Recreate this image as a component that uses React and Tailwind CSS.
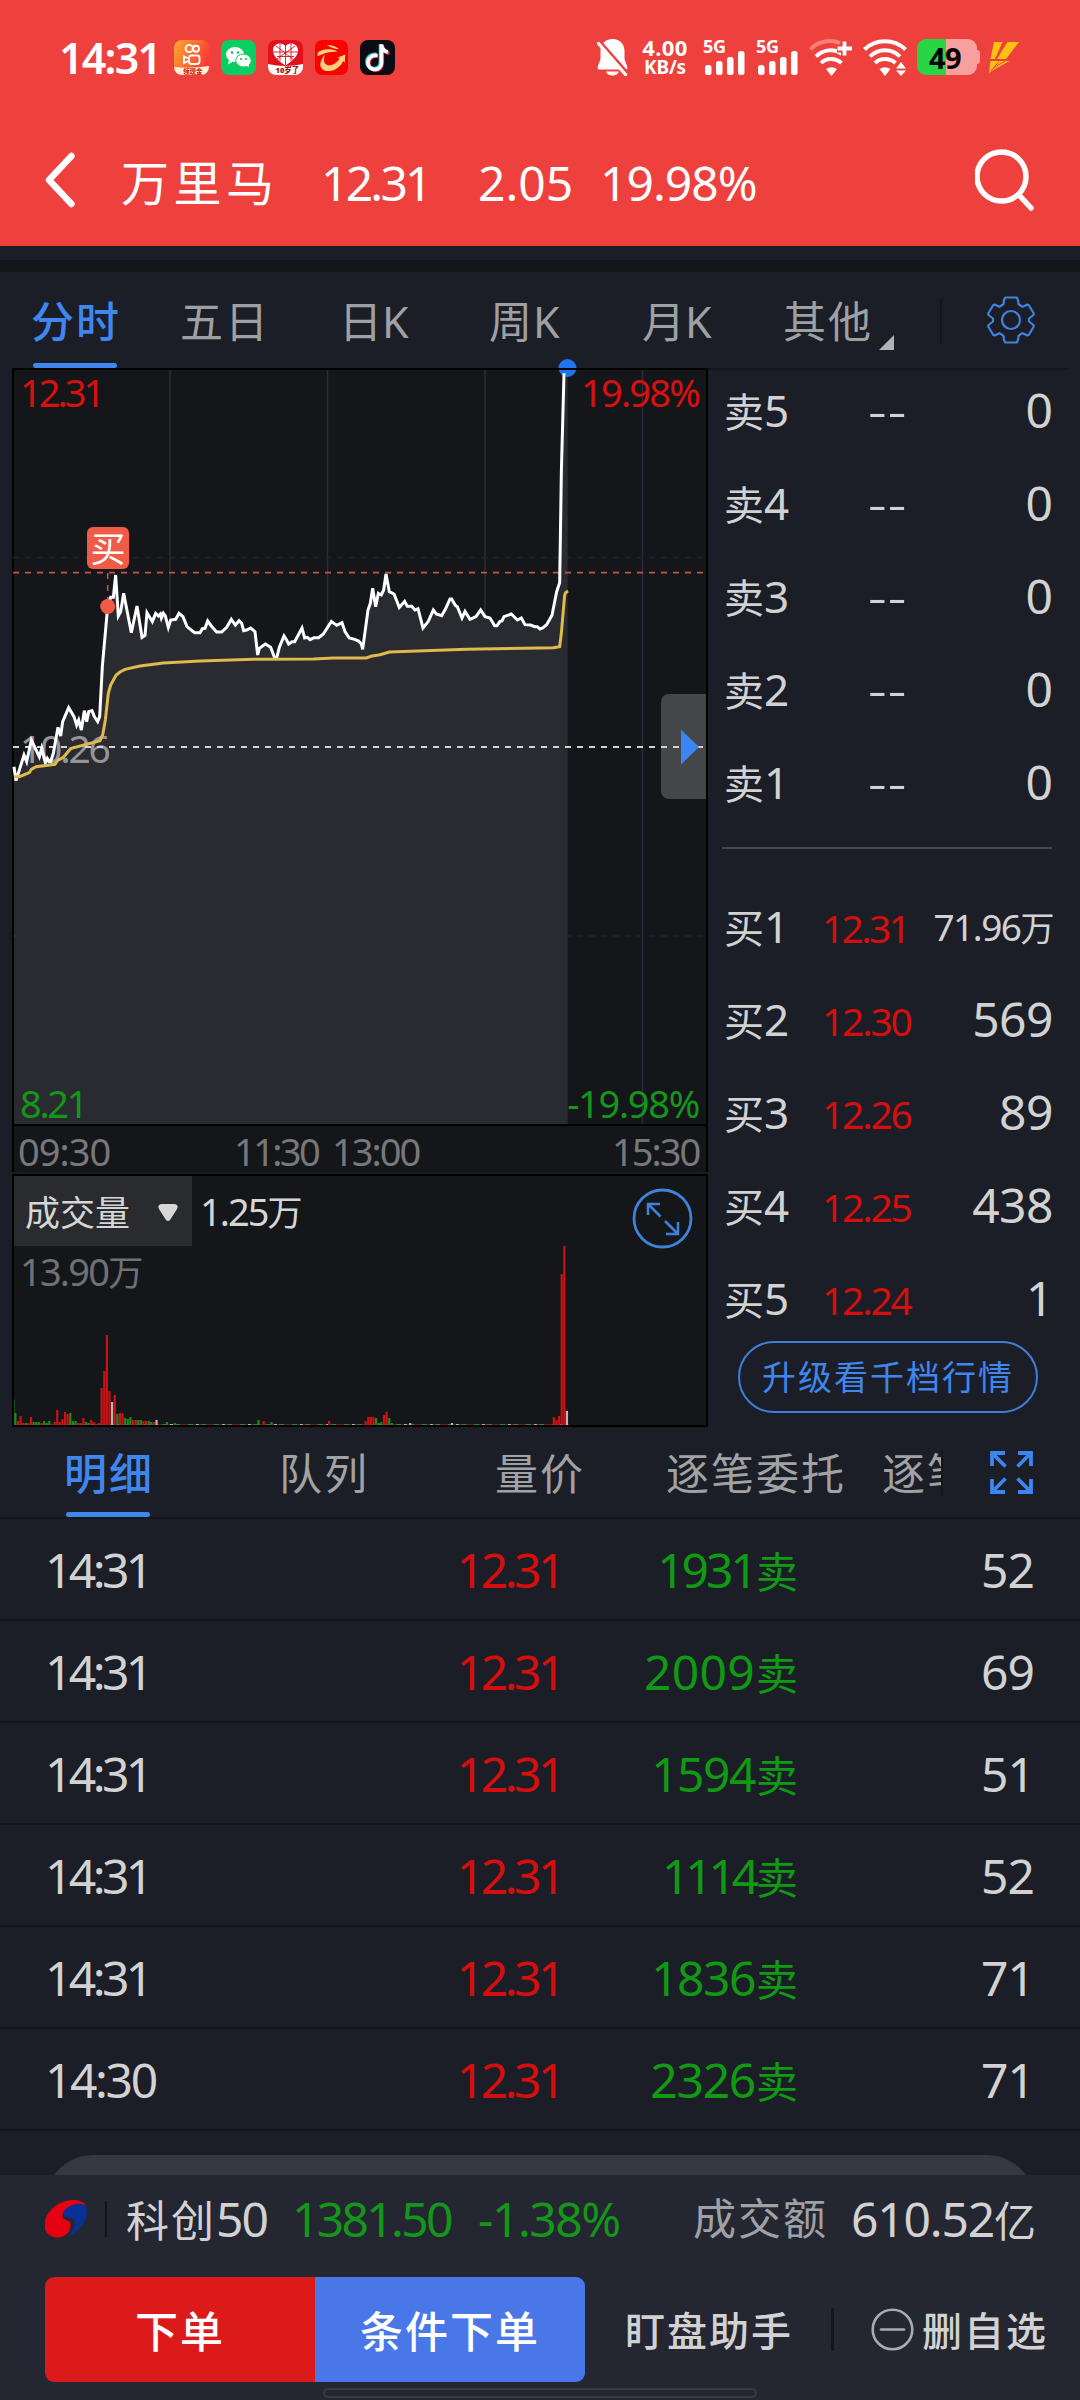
import React from 'react';

// Intraday price, three units per pixel, origin at the left page edge
const PRICE_POINTS =
    '42,680 48,722 72,645 80,665 94,600 118,650 125,625 136,668 142,655 148,665 152,665 160,640 174,562 182,588 188,545 206,503 222,530 230,555 236,540 244,570 253,512 260,545 266,515 276,512 283,530 293,545 299,530 307,380 323,200 332,172 340,172 347,105 355,228 362,215 371,160 394,278 411,198 426,292 435,286 441,218 457,245 467,220 475,228 481,222 484,234 490,220 496,228 505,262 512,240 527,238 537,220 549,230 561,260 584,278 600,278 607,266 615,265 623,243 634,258 650,276 665,276 680,262 694,238 706,255 717,242 725,250 731,272 740,270 752,264 765,275 773,345 778,325 796,312 812,322 824,354 830,354 838,322 852,288 860,300 866,312 876,305 884,305 906,264 914,294 922,292 930,299 942,293 956,293 970,282 994,244 1010,256 1026,248 1035,275 1048,294 1064,298 1076,303 1084,312 1088,328 1104,210 1111,190 1118,145 1127,200 1135,160 1144,165 1151,150 1158,102 1168,155 1182,162 1198,202 1214,184 1222,199 1235,199 1245,210 1254,206 1269,264 1285,244 1300,210 1309,222 1325,227 1336,208 1350,177 1355,177 1366,196 1372,200 1386,234 1395,214 1410,238 1428,230 1442,210 1455,230 1470,234 1484,257 1491,257 1500,244 1506,243 1512,230 1534,222 1552,240 1564,234 1575,254 1592,255 1604,260 1612,260 1620,267 1628,264 1640,254 1656,226 1670,155 1679,128 1681,0 1684,-200 1692,-500';

const AVERAGE_POINTS =
    '42,710 58,710 88,698 94,688 108,680 165,673 172,662 190,652 212,626 300,602 308,585 316,540 325,460 332,435 348,406 360,396 375,388 420,378 490,369 600,363 760,358 940,357 1000,354 1098,354 1116,348 1140,344 1168,336 1400,328 1660,323 1679,320 1684,280 1694,165 1697,158 1704,153';

const VOLUME_STEP = 2.614;
const VOLUME_COLORS = { r: '#cc1212', g: '#1c8a1c', w: '#b9b9bb' };

// [minute, height, direction]
const VOLUME_BARS = [
    [0, 12, 'g'], [1, 4, 'r'], [2, 9, 'r'], [3, 2, 'r'], [4, 2, 'g'], [5, 2, 'r'], [6, 8, 'r'], [7, 3, 'g'],
    [8, 3, 'g'], [9, 3, 'g'], [10, 2, 'r'], [11, 4, 'g'], [12, 2, 'g'], [13, 4, 'g'], [15, 3, 'r'], [16, 15, 'r'],
    [17, 3, 'r'], [18, 6, 'r'], [19, 13, 'r'], [20, 11, 'r'], [21, 12, 'g'], [22, 4, 'g'], [23, 4, 'g'],
    [24, 2, 'r'], [25, 2, 'r'], [26, 7, 'r'], [27, 3, 'g'], [28, 2, 'g'], [29, 5, 'r'], [30, 3, 'r'], [32, 2, 'r'],
    [33, 37, 'r'], [34, 54, 'r'], [35, 90, 'r'], [36, 34, 'r'], [37, 23, 'w'], [38, 30, 'r'], [39, 11, 'g'],
    [40, 12, 'r'], [41, 12, 'r'], [42, 7, 'g'], [43, 6, 'g'], [44, 8, 'g'], [45, 5, 'r'], [46, 5, 'r'],
    [47, 5, 'g'], [48, 5, 'g'], [49, 4, 'r'], [50, 4, 'r'], [51, 4, 'g'], [52, 3, 'g'], [53, 3, 'r'],
    [54, 5, 'w'], [58, 3, 'g'], [61, 2, 'g'], [93, 5, 'g'], [95, 4, 'r'], [98, 3, 'g'],
    [120, 4, 'r'], [134, 4, 'r'], [135, 8, 'r'], [136, 8, 'r'], [137, 8, 'r'], [138, 7, 'g'], [139, 2, 'g'],
    [140, 3, 'g'], [141, 10, 'r'], [142, 13, 'r'], [143, 7, 'g'], [144, 2, 'g'], [151, 2, 'w'], [167, 2, 'w'],
    [206, 8, 'r'], [207, 5, 'r'], [208, 9, 'r'], [209, 151, 'r'], [210, 179, 'r'], [211, 14, 'w'],
];

const SELL_LEVELS = ['5', '4', '3', '2', '1'];

const BUY_LEVELS = [
    { level: '1', price: '12.31', volume: '71.96', unit: '万', tracking: 'tracking-[-2.700px]' },
    { level: '2', price: '12.30', volume: '569', tracking: 'tracking-[-2.200px]' },
    { level: '3', price: '12.26', volume: '89', tracking: 'tracking-[-2.200px]' },
    { level: '4', price: '12.25', volume: '438', tracking: 'tracking-[-2.200px]' },
    { level: '5', price: '12.24', volume: '1', tracking: 'tracking-[-2.200px]' },
];

// The digit 1 is narrow, so each figure carries its own tracking
const TRADES = [
    { time: '14:31', volume: '1931', count: '52', timeClass: 'tracking-[-3.600px]', volumeClass: 'tracking-[-3px]' },
    { time: '14:31', volume: '2009', count: '69', timeClass: 'tracking-[-3.600px]', volumeClass: 'tracking-[0.300px]' },
    { time: '14:31', volume: '1594', count: '51', timeClass: 'tracking-[-3.600px]', volumeClass: 'tracking-[-1.500px]' },
    { time: '14:31', volume: '1114', count: '52', timeClass: 'tracking-[-3.600px]', volumeClass: 'tracking-[-4.200px]' },
    { time: '14:31', volume: '1836', count: '71', timeClass: 'tracking-[-3.600px]', volumeClass: 'tracking-[-1.500px]' },
    { time: '14:30', volume: '2326', count: '71', timeClass: 'tracking-[-2.400px]', volumeClass: 'tracking-[-1.300px]' },
];

const AppBadges = () => (
    <div className="flex items-center gap-[12px]">
        <svg width="35" height="35" viewBox="0 0 35 35">
            <defs>
                <linearGradient id="ks" x1="0" y1="0" x2="1" y2="0.5">
                    <stop offset="0" stopColor="#ffab2e" />
                    <stop offset="1" stopColor="#ff3a36" />
                </linearGradient>
                <clipPath id="ksClip">
                    <rect width="35" height="35" rx="8" />
                </clipPath>
            </defs>
            <g clipPath="url(#ksClip)">
                <rect width="35" height="35" fill="url(#ks)" />
                <path d="M0 27q17 2 35-1v9H0z" fill="#fff0d8" />
                <g fill="none" stroke="#fff" strokeWidth="1.9">
                    <circle cx="15.2" cy="8.5" r="3.6" />
                    <circle cx="22" cy="8.8" r="3" />
                    <rect x="15" y="15.5" width="10.5" height="8.5" rx="2.4" />
                    <path d="M14.5 18.5 10 16.500v6.500l4.500-2" />
                </g>
                <text x="9" y="34" fontSize="6.500" fontWeight="900" fill="#d02b20">领现金</text>
            </g>
        </svg>
        <svg width="35" height="35" viewBox="0 0 35 35">
            <rect width="35" height="35" rx="8" fill="#07cf63" />
            <g fill="#fff">
                <ellipse cx="14" cy="14.500" rx="9" ry="7.500" />
                <path d="M8 20l-1 4.500 5-3z" />
                <ellipse cx="22.500" cy="20.500" rx="7.800" ry="6.500" stroke="#07cf63" strokeWidth="1" />
                <path d="M25 25l2.500 2.500.500-4z" />
            </g>
            <g fill="#07b957">
                <circle cx="11" cy="12.500" r="1.200" />
                <circle cx="17" cy="12.500" r="1.200" />
                <circle cx="20" cy="19" r="1" />
                <circle cx="25" cy="19" r="1" />
            </g>
        </svg>
        <svg width="35" height="35" viewBox="0 0 35 35">
            <defs>
                <clipPath id="pddClip">
                    <rect width="35" height="35" rx="8" />
                </clipPath>
            </defs>
            <g clipPath="url(#pddClip)">
                <rect width="35" height="35" fill="#e3101c" />
                <path d="M0 24q17 4 35 0v11H0z" fill="#fff" />
                <path d="M17.500 25.500C9 20 4.500 15 5 9.500 5.500 4 13 1 17.500 6c4.500-5 12-2 12.500 3.500.500 5.500-4 10.500-12.500 16z" fill="#fff" />
                <path d="M8 6l18 14M27 6 9 19M5 12h25M12 3v18M23 3v18M17.500 5v20M9 16.500h17" stroke="#e3101c" strokeWidth="0.900" fill="none" />
                <text x="7.500" y="33" fontSize="7.500" fontWeight="900" fill="#a01818">10岁了</text>
            </g>
        </svg>
        <svg width="33" height="35" viewBox="0 0 33 35">
            <rect width="33" height="35" rx="7" fill="#fb0200" />
            <path d="M12 5.500c4-1 8 0 12 3.500-3 .2-5-.5-7-1.200z" fill="#ffd27a" />
            <path d="M2.500 13c4-4 12-5 20-1.800-5 .6-7 .8-10 1.400-4 .7-6 2.600-10 3.400z" fill="#ffd27a" />
            <path d="M10 14.500c-3 3-6 9-4 13 2 4.500 10 4.500 15 1.500 4-2.500 6-5 7-8l1.800 1.500.5-8-7.500 3 1.700 1.200c-2.500 4-7 7-11.500 6.500-4-.5-5-5-3-10.700z" fill="#ffd27a" />
        </svg>
        <svg width="35" height="35" viewBox="0 0 35 35">
            <rect width="35" height="35" rx="8" fill="#0b0b14" />
            <g fill="none" strokeWidth="3.600">
                <path d="M17.500 15.500c-5-.7-9.500 2-9.500 7s4 7.300 7.500 7 6-3 6-7V5" stroke="#27d7d8" transform="translate(-1 -1)" />
                <path d="M17.500 15.500c-5-.7-9.500 2-9.500 7s4 7.300 7.500 7 6-3 6-7V5c.5 4 3 7 7 7.500" stroke="#f4264f" transform="translate(.8 .6)" />
                <path d="M17.500 15.500c-5-.7-9.500 2-9.500 7s4 7.300 7.500 7 6-3 6-7V4.500c.5 4.500 3 7 6.500 7.500" stroke="#fff" />
            </g>
        </svg>
    </div>
);

const SignalBars = () => (
    <div className="relative h-9 w-[42px]">
        <span className="absolute left-0 top-0 text-[18px] font-bold leading-[14px] tracking-[-0.200px]">5G</span>
        <svg className="absolute left-0 top-0" width="42" height="36" viewBox="0 0 42 36" fill="#fff">
            <rect x="2" y="26" width="6.500" height="10" rx="2.500" />
            <rect x="13" y="22" width="6.500" height="14" rx="2.500" />
            <rect x="24" y="18" width="6.500" height="18" rx="2.500" />
            <rect x="35" y="12" width="6.500" height="24" rx="2.500" />
        </svg>
    </div>
);

const StatusBar = () => (
    <div className="flex h-[114px] items-center pl-[59px] text-white">
        <span className="w-[115px] text-[43px] font-semibold leading-none tracking-[-1.800px]">14:31</span>
        <AppBadges />
        <svg className="ml-[202px] shrink-0" width="31" height="37" viewBox="0 0 31 37">
            <path d="M15.500 0C8 0 3.500 5 3.500 12v8L.8 27.500c-.5 2 .2 3 1.700 3h26c1.500 0 2.200-1 1.700-3L27.500 20v-8c0-7-4.500-12-12-12z" fill="#fff" />
            <path d="M9 32.500h13c-1.500 5.500-11.500 5.500-13 0z" fill="#fff" />
            <path d="M2.500 2 30 33.500" stroke="#ee403c" strokeWidth="3" />
            <path d="M1.500 4.500 28.500 35.500" stroke="#fff" strokeWidth="3.400" strokeLinecap="round" />
        </svg>
        <div className="ml-[12px] flex h-9 w-[50px] shrink-0 flex-col items-center justify-between font-bold">
            <span className="text-[22px] leading-[17px] tracking-[0.400px]">4.00</span>
            <span className="text-[19px] leading-[15px] tracking-[-0.200px]">KB/s</span>
        </div>
        <div className="ml-[13px] flex shrink-0 gap-[11px]">
            <SignalBars />
            <SignalBars />
        </div>
        <svg className="ml-[11px] shrink-0" width="44" height="37" viewBox="0 0 44 37" fill="none" stroke="#fff" strokeWidth="4">
            <path d="M1.500 10.500C9 1.500 22 .5 31 4" stroke="#f97f7c" />
            <path d="M7 17.500c7-7 18-8.500 26-2.500M12 24c5-5.500 15-5.500 20.500 0" />
            <path d="M17 30q5.500-3.500 11 0l-5.500 7z" fill="#fff" stroke="none" />
            <path d="M28 10h15M35.500 3v14" stroke="#ee403c" strokeWidth="7" />
            <path d="M28.500 9.500H43M35.500 2.500v14" strokeWidth="3.800" />
        </svg>
        <svg className="ml-[10px] shrink-0" width="44" height="37" viewBox="0 0 44 37" fill="none" stroke="#fff" strokeWidth="4">
            <path d="M1.500 10.500c11-11 30-11 41 0M7 17.500c8-8.500 22-8.500 30 0M12 24c5-5.500 15-5.500 20.500 0" />
            <path d="M16.500 30q5.500-3.500 11 0L22 37z" fill="#fff" stroke="none" />
            <path d="M33 29.500h10L38 23zM33 31.500h10L38 37z" fill="#fff" stroke="none" />
        </svg>
        <div className="ml-[10px] flex shrink-0 items-center">
            <div className="flex h-9 w-[60px] items-center justify-center rounded-[9px] bg-linear-to-r from-[#27d545] from-48% to-[#f8a09e] to-48% pr-1 text-[29px] font-bold leading-none tracking-[-0.500px] text-black">
                49
            </div>
            <div className="h-[14px] w-[3px] rounded-r-full bg-[#f8a09e]" />
        </div>
        <svg className="ml-[9px] shrink-0" width="30" height="31" viewBox="0 0 30 31" fill="#fbc012">
            <path d="M5 0H13.500L6 17H1.500zM18.500 0H30L17 17H8zM1.300 19H20.500L6 27 0 31z" />
            <path d="M2 29 10 19.500M4 26 16 19" stroke="#ee403c" strokeWidth="1" />
        </svg>
    </div>
);

const TitleBar = () => (
    <div className="flex h-[132px] items-center pl-[45px] text-[48px] leading-none text-white">
        <svg className="shrink-0" width="30" height="56" viewBox="0 0 30 56" fill="none" stroke="#fff" strokeWidth="6.500" strokeLinecap="round" strokeLinejoin="round">
            <path d="M26.500 4 4 28l22.500 24" />
        </svg>
        <h1 className="ml-[46px] mt-[6px] w-[200px] text-[48px] tracking-[4.500px]">万里马</h1>
        <span className="mt-[6px] w-[157px] tracking-[-2.800px]">12.31</span>
        <span className="mt-[6px] w-[122px]">2.05</span>
        <span className="mt-[6px] w-[375px] tracking-[-1px]">19.98%</span>
        <svg className="shrink-0" width="60" height="64" viewBox="0 0 60 64" fill="none" stroke="#fff" strokeWidth="5.500" strokeLinecap="round">
            <circle cx="26.500" cy="28.500" r="24.500" />
            <path d="M44.500 47.500 56 60" />
        </svg>
    </div>
);

const GearIcon = () => (
    <svg width="48" height="48" viewBox="0 0 48 48" fill="none" stroke="#4082dc" strokeWidth="2.200" strokeLinejoin="round">
        <path d="M17 4 18.200 1.500H29.800L31 4l.5 4q2 1.500 4 2.800l5-2.300 1.500 1 4.800 8-.3 1.500-4.500 3.500v3l4.500 3.500.3 1.500-4.800 8-1.500 1-5-2.300q-2 1.300-4 2.800l-.5 4-1.200 2.500H18.200L17 44l-.5-4q-2-1.500-4-2.800l-5 2.300-1.500-1-4.800-8 .3-1.500L6 25.500v-3L1.500 19l-.3-1.500L6 9.500l1.500-1 5 2.300q2-1.300 4-2.800z" />
        <circle cx="24" cy="24" r="9" />
    </svg>
);

const PeriodTabs = () => (
    <div className="relative flex h-[96px] items-center text-[43px] leading-none text-[#9fa0a3]">
        <div className="relative flex h-full w-[148px] items-center pl-[31px] pt-[2px] font-medium tracking-[2px] text-[#3f86ee]">
            分时
            <div className="absolute bottom-0 left-[33px] h-[5px] w-[84px] rounded-full bg-[#3f86ee]" />
        </div>
        <span className="w-[160px] pl-[32px] pt-[2px] tracking-[2px]">五日</span>
        <span className="w-[150px] pl-[31px] pt-[2px]">日K</span>
        <span className="w-[150px] pl-[31px] pt-[2px] tracking-[1px]">周K</span>
        <span className="w-[150px] pl-[34px] pt-[2px]">月K</span>
        <span className="w-[121px] pl-[25px] pt-[2px] tracking-[2px]">其他</span>
        <svg className="mt-[45px]" width="15" height="15" viewBox="0 0 15 15">
            <path d="M15 0v15H0z" fill="#b0b1b3" />
        </svg>
        <div className="ml-[46px] h-[45px] w-[2px] bg-[#15161a]" />
        <div className="ml-[45px]">
            <GearIcon />
        </div>
    </div>
);

const PriceChart = () => (
    <div className="relative h-[758px] w-[696px] border-2 border-black bg-[#15161a] text-[38px] leading-none">
        <svg className="absolute left-0 top-0 overflow-visible" width="692" height="754" viewBox="14 370 692 754" fill="none">
            <path d="M170 370V1124M327.500 370V1124M485 370V1124M642.500 370V1124" stroke="#2c2d38" strokeWidth="1.500" />
            <path d="M13 557.500H706M13 936H706" stroke="#222328" strokeWidth="1.500" strokeDasharray="6 6" />
            <g transform="translate(0 540) scale(0.33333)">
                <polygon points={`42,1752 ${PRICE_POINTS} 1703,-500 1703,1752`} fill="#2a2b30" />
            </g>
            <path d="M13 572.700H706" stroke="#c25548" strokeWidth="1.800" strokeDasharray="6 6" />
            <path d="M107.700 573V600" stroke="#c25548" strokeWidth="1.600" strokeDasharray="6 6" />
            <text x="20" y="762.500" fontSize="39" letterSpacing="-2.200" fill="#949599">10.26</text>
            <path d="M669 694H706V799H669a8 8 0 0 1-8-8V702a8 8 0 0 1 8-8z" fill="#454649" />
            <path d="M13 747H706" stroke="#d3d3d6" strokeWidth="2" strokeDasharray="6 6" />
            <path d="M681 729.500 699 747 681 764.500z" fill="#3b86f4" />
            <circle cx="567.500" cy="368" r="9" fill="#1f74f0" />
            <g transform="translate(0 540) scale(0.33333)">
                <polyline points={PRICE_POINTS} stroke="#fff" strokeWidth="9" />
                <polyline points={AVERAGE_POINTS} stroke="#dfba4c" strokeWidth="9" />
            </g>
            <circle cx="107.700" cy="606.500" r="7.500" fill="#f05a46" />
            <path d="M552 369H584" stroke="#000" strokeWidth="2" />
        </svg>
        <span className="absolute left-[6px] top-[3px] tracking-[-3px] text-[#d81010]">12.31</span>
        <span className="absolute right-[7px] top-[3px] tracking-[-1.800px] text-[#d81010]">19.98%</span>
        <span className="absolute bottom-[2px] left-[6px] tracking-[-2.300px] text-[#14961a]">8.21</span>
        <span className="absolute bottom-[2px] right-[7px] tracking-[-1.300px] text-[#14961a]">-19.98%</span>
        <span className="absolute left-[73px] top-[157px] flex h-[42px] w-[42px] items-center justify-center rounded-[6px] bg-[#f05a46] text-[35px] text-white">
            买
        </span>
    </div>
);

const TimeAxis = () => (
    <div className="flex h-[46px] w-[696px] items-center border-x-2 border-black bg-[#15161a] pt-[3px] text-[38px] leading-none tracking-[-1px] text-[#77787b]">
        <span className="w-[220px] pl-[4px]">09:30</span>
        <span className="w-[98px] tracking-[-2.600px]">11:30</span>
        <span className="w-[280px] tracking-[-2px]">13:00</span>
        <span className="tracking-[-2px]">15:30</span>
    </div>
);

const VolumeChart = () => (
    <div className="relative h-[253px] w-[696px] border-2 border-black bg-[#15161a] leading-none">
        <div className="flex h-[70px] items-center text-[#d6d6d7]">
            <div className="flex h-full w-[178px] items-center bg-[#2a2b2f] pl-[11px] pt-[2px] text-[35px]">
                成交量
                <svg className="ml-[28px]" width="20" height="17" viewBox="0 0 20 17">
                    <path d="M3 0h14q4 1 2 5l-7 11q-2 2-4 0L1 5Q-1 1 3 0z" fill="#d6d6d7" />
                </svg>
            </div>
            <span className="ml-[8px] text-[38px] tracking-[-2px]">1.25<span className="text-[35px]">万</span></span>
        </div>
        <span className="ml-[6px] mt-[6px] block text-[38px] tracking-[-1.800px] text-[#707174]">13.90<span className="text-[35px]">万</span></span>
        <svg className="absolute right-[13px] top-[12px]" width="61" height="61" viewBox="0 0 61 61" fill="none" stroke="#3f82dc" strokeWidth="2.800">
            <circle cx="30.500" cy="30.500" r="28.500" />
            <path d="M28.500 28.500 16 16M16 27V16h12M33 33l12.500 12.500M46 34v12H34" strokeWidth="2.500" />
        </svg>
        <svg className="absolute bottom-0 left-0" width="692" height="182" viewBox="0 0 692 182">
            <rect y="156" width="1" height="26" fill="#14501a" />
            <rect y="181" width="555" height="1" fill="#7a1a1a" />
            <path d="M70 181.500H550" stroke="#2a8a2a" strokeWidth="1" strokeDasharray="5 8" />
            <path d="M78 181.500H550" stroke="#b0b0b0" strokeWidth="1" strokeDasharray="3 23" />
            {VOLUME_BARS.map(([minute, height, direction]) => (
                <rect
                    key={minute}
                    x={minute * VOLUME_STEP + 0.3}
                    y={182 - height}
                    width="2.200"
                    height={height}
                    fill={VOLUME_COLORS[direction]}
                />
            ))}
        </svg>
    </div>
);

const OrderBook = () => (
    <div className="flex w-[360px] flex-col border-t-2 border-[#15161c] pl-[16px] leading-none text-[#d2d2d3]">
        <div className="flex h-[477px] flex-col">
            {SELL_LEVELS.map((level) => (
                <div key={level} className="flex h-[93px] shrink-0 items-center pb-[14px]">
                    <span className="w-[144px] text-[40px]">卖<span className="text-[44px]">{level}</span></span>
                    <span className="pb-[2px] text-[58px] font-light tracking-[1px]">--</span>
                    <span className="ml-auto pr-[15px] text-[48px]">0</span>
                </div>
            ))}
        </div>
        <div className="ml-[-2px] h-[2px] w-[330px] bg-[#45464e]" />
        <div className="flex flex-col pt-[30px]">
            {BUY_LEVELS.map(({ level, price, volume, unit, tracking }) => (
                <div key={level} className="flex h-[93px] shrink-0 items-center">
                    <span className="w-[98px] text-[40px]">买<span className="text-[44px]">{level}</span></span>
                    <span className={`pt-[3px] text-[39px] text-[#d60e0e] ${tracking}`}>{price}</span>
                    {unit ? (
                        <span className="ml-auto pr-[15px] pt-[2px] text-[37px] tracking-[-1.500px]">{volume}<span className="text-[34px]">{unit}</span></span>
                    ) : (
                        <span className="ml-auto pr-[15px] text-[48px] tracking-[-0.500px]">{volume}</span>
                    )}
                </div>
            ))}
        </div>
        <button className="ml-[14px] mt-[-3px] h-[72px] w-[300px] shrink-0 rounded-full border-2 border-[#3f7fd8] text-[34px] tracking-[2px] text-[#3f86ee]">
            升级看千档行情
        </button>
    </div>
);

const DetailTabs = () => (
    <div className="flex h-[92px] items-center border-b-2 border-[#15161c] text-[43px] leading-none text-[#a1a2a4]">
        <div className="relative flex h-full w-[216px] items-center pl-[64px] pt-[2px] font-medium tracking-[2px] text-[#3f86ee]">
            明细
            <div className="absolute bottom-0 left-[66px] h-[5px] w-[84px] rounded-full bg-[#3f86ee]" />
        </div>
        <span className="w-[216px] pl-[63px] pt-[2px] tracking-[2px]">队列</span>
        <span className="w-[234px] pl-[63px] pt-[2px] tracking-[2px]">量价</span>
        <span className="w-[216px] pt-[2px] tracking-[2px]">逐笔委托</span>
        <span className="w-[59px] overflow-hidden whitespace-nowrap pt-[2px] tracking-[2px]">逐笔</span>
        <div className="h-[45px] w-[2px] bg-[#15161a]" />
        <svg className="ml-[47px]" width="43" height="43" viewBox="0 0 43 43" fill="none" stroke="#3a86f2" strokeWidth="3.800">
            <path d="M2 15V2H15M2.500 2.500 15.500 15.500M28 2H41V15M40.500 2.500 27.500 15.500M2 28V41H15M2.500 40.500 15.500 27.500M28 41H41V28M40.500 40.500 27.500 27.500" />
        </svg>
    </div>
);

const TradeList = () => (
    <div>
        {TRADES.map((trade, index) => (
            <div key={index} className="flex h-[102px] items-center border-b-2 border-[#15161c] pl-[45px] pt-[2px] text-[48px] leading-none text-[#d2d2d3]">
                <span className={`w-[300px] ${trade.timeClass}`}>{trade.time}</span>
                <span className="w-[217px] text-right tracking-[-3.500px] text-[#d60e0e]">12.31</span>
                <span className="w-[236px] text-right text-[#109a14]">
                    <span className={trade.volumeClass}>{trade.volume}</span>
                    <span className="ml-[1px] text-[42px]">卖</span>
                </span>
                <span className="w-[236px] text-right tracking-[-1px]">{trade.count}</span>
            </div>
        ))}
    </div>
);

const BottomBar = () => (
    <div className="flex h-[225px] flex-col bg-[#242632] leading-none text-[#d2d2d3]">
        <div className="flex h-[87px] items-center pl-[45px] text-[48px]">
            <svg width="42" height="40" viewBox="0 0 42 40">
                <path d="M41 7C37-1 20-1 9 8-2 17-3 30 3 35c7 6 19 4 22-5 2-6 0-8-4-9-6-2-4-9 3-13 7-4 13-4 17-1z" fill="#e50012" />
                <path d="M41 7c4 11-5 26-19 31 4-4 7-8 8-13 1-4-1-5-6-6-6-1-8-5-3-9 6-5 15-7 20-3z" fill="#0a2f96" />
            </svg>
            <div className="ml-[18px] h-[36px] w-[2px] bg-[#13141a]" />
            <span className="ml-[19px] w-[166px] tracking-[-2px]"><span className="text-[43px] tracking-[2px]">科创</span>50</span>
            <span className="w-[186px] tracking-[-2.700px] text-[#14961a]">1381.50</span>
            <span className="w-[215px] tracking-[-1.500px] text-[#14961a]">-1.38%</span>
            <span className="w-[158px] text-[43px] tracking-[2px] text-[#a0a1a5]">成交额</span>
            <span className="tracking-[-1.200px]">610.52<span className="text-[42px]">亿</span></span>
        </div>
        <div className="mt-[15px] flex h-[105px] items-center pl-[45px] text-[40px] font-medium">
            <button className="h-full w-[270px] rounded-l-[9px] bg-[#dc1a1a] pt-[3px] text-[43px] tracking-[2px] text-white">下单</button>
            <button className="h-full w-[270px] rounded-r-[9px] bg-[#4a77e8] pt-[3px] text-[43px] tracking-[2px] text-white">条件下单</button>
            <span className="w-[246px] pl-[40px] pt-[3px] tracking-[2px]">盯盘助手</span>
            <div className="h-[43px] w-[3px] bg-[#15161c]" />
            <svg className="ml-[37px]" width="43" height="43" viewBox="0 0 43 43" fill="none" stroke="#a9aaad" strokeWidth="2.600">
                <circle cx="21.500" cy="21.500" r="19.800" />
                <path d="M10 21.500h23" strokeLinecap="round" />
            </svg>
            <span className="ml-[8px] pt-[3px] tracking-[2px]">删自选</span>
        </div>
        <div className="ml-[323px] mt-[6px] h-[10px] w-[434px] rounded-full border-2 border-[#383942] bg-[#262830]" />
    </div>
);

const App = () => (
    <div className="h-[2400px] w-[1080px] overflow-hidden bg-[#1b1e26] font-['Noto_Sans','Noto_Sans_CJK_SC',sans-serif]">
        <header className="h-[246px] bg-[#ee403c]">
            <StatusBar />
            <TitleBar />
        </header>
        <div className="mt-[14px] h-[12px] bg-[#15161a]" />
        <PeriodTabs />
        <main className="flex h-[1059px] pl-3">
            <div className="flex flex-col">
                <PriceChart />
                <TimeAxis />
                <div className="h-[2px]" />
                <VolumeChart />
            </div>
            <OrderBook />
        </main>
        <DetailTabs />
        <TradeList />
        <div className="flex h-[44px] items-end justify-center overflow-hidden">
            <div className="h-[20px] w-[990px] overflow-hidden">
                <div className="h-[96px] rounded-[48px] bg-[#363743]" />
            </div>
        </div>
        <BottomBar />
    </div>
);

export default App;
